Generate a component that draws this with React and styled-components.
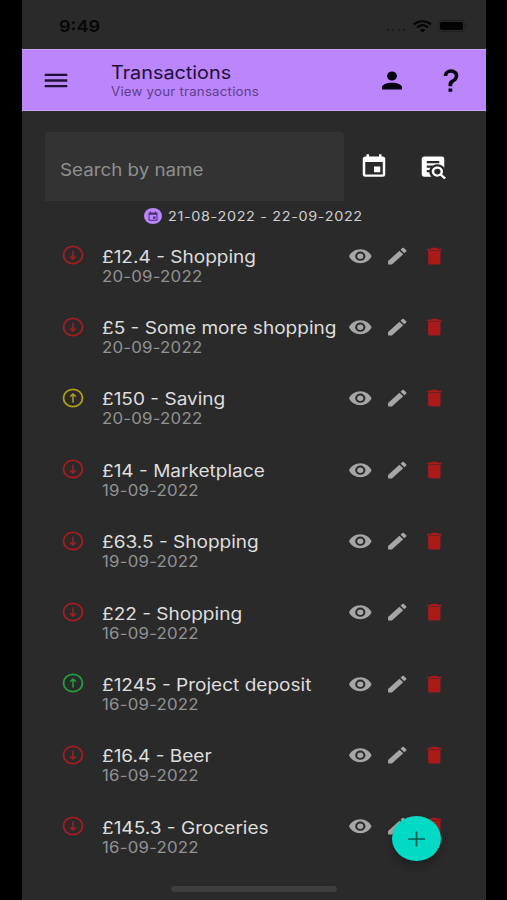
import React from "react";
import styled, { createGlobalStyle } from "styled-components";

const GlobalStyle = createGlobalStyle`
  * { box-sizing: border-box; }
  body { margin: 0; background: #000; font-family: Inter, "Liberation Sans", sans-serif; }
  button { border: 0; padding: 0; background: none; font: inherit; color: inherit; }
`;

const Screen = styled.main`
  position: relative;
  width: 464px;
  height: 900px;
  margin-left: 22px;
  background: #2a2a2a;
  overflow: hidden;
`;

const Label = styled.span`
  display: block;
  width: max-content;
  white-space: nowrap;
  font-size: ${(p) => p.$size}px;
  line-height: ${(p) => p.$line}px;
  font-weight: ${(p) => p.$weight || 400};
  letter-spacing: ${(p) => p.$tracking || 0}px;
  color: ${(p) => p.$color};
  transform: scaleX(${(p) => p.$stretch || 1.1});
  transform-origin: left center;
`;

const StatusBar = styled.div`
  display: flex;
  align-items: center;
  justify-content: space-between;
  height: 49px;
  padding: 3px 18px 0 37px;
`;

const StatusIcons = styled.div`
  display: flex;
  align-items: center;
  gap: 6px;
`;

const SignalDots = styled.svg`
  margin-top: 8px;
`;

const AppBar = styled.header`
  display: flex;
  align-items: center;
  height: 62px;
  padding: 0 20px 0 19px;
  background: #bb86fc;
  border-top: 1px solid #c9a2f5;
  border-bottom: 1px solid #c9a2f5;
`;

const Heading = styled.div`
  flex: 1;
  padding: 3px 0 0 40px;
`;

const AppActions = styled.div`
  display: flex;
  gap: 29px;
`;

const IconButton = styled.button`
  display: flex;
  color: ${(p) => p.$color};
`;

const SearchRow = styled.div`
  display: flex;
  align-items: center;
  height: 69px;
  margin: 21px 0 0 23px;
`;

const SearchField = styled.div`
  display: flex;
  align-items: center;
  width: 299px;
  height: 69px;
  padding: 6px 15px 0;
  margin-right: 14.5px;
  background: #333;
  border-radius: 4px 4px 0 0;
`;

const SearchActions = styled.div`
  display: flex;
  gap: 29.5px;
`;

const DateRange = styled.div`
  display: flex;
  align-items: center;
  height: 30px;
  padding-left: 122px;
  gap: 6px;
`;

const DateBadge = styled.span`
  display: flex;
  align-items: center;
  justify-content: center;
  width: 18px;
  height: 16px;
  border-radius: 50%;
  background: #bb86fc;
  color: #4c2b73;
`;

const DateText = styled.div`
  padding-top: 2px;
`;

const List = styled.div`
  display: grid;
  grid-auto-rows: 71.35px;
  padding-top: 13.5px;
`;

const Row = styled.div`
  display: grid;
  grid-template-columns: 40px 246px auto;
  align-items: start;
  padding-left: 40px;
`;

const DirectionSlot = styled.span`
  display: flex;
  padding-top: 0.9px;
`;

const RowText = styled.div`
  min-width: 0;
  padding-top: 2.3px;
`;

const RowActions = styled.div`
  display: flex;
  gap: 12.6px;
`;

const Fab = styled.button`
  position: absolute;
  left: 370px;
  top: 816px;
  display: flex;
  align-items: center;
  justify-content: center;
  width: 49px;
  height: 45px;
  border-radius: 50%;
  background: #03dac6;
  color: #07584f;
  box-shadow: 0 5px 9px rgba(0, 0, 0, 0.28);
`;

const HomeIndicator = styled.div`
  position: absolute;
  left: 149px;
  bottom: 8px;
  width: 166px;
  height: 6px;
  border-radius: 3px;
  background: #3e3e3e;
`;

const paths = {
  menu: "M3,5.9H21V8.1H3V5.9M3,10.9H21V13.1H3V10.9M3,15.9H21V18.1H3V15.9Z",
  account: "M12,4A4,4 0 0,1 16,8A4,4 0 0,1 12,12A4,4 0 0,1 8,8A4,4 0 0,1 12,4M12,14C16.42,14 20,15.79 20,18V20H4V18C4,15.79 7.58,14 12,14Z",
  help: "M10,19H13V22H10V19M12,2C17.35,2.22 19.68,7.62 16.5,11.67C15.67,12.67 14.33,13.33 13.67,14.17C13,15 13,16 13,17H10C10,15.33 10,13.92 10.67,12.92C11.33,11.92 12.67,11.33 13.5,10.67C15.92,8.43 15.32,5.26 12,5A3,3 0 0,0 9,8H6A6,6 0 0,1 12,2Z",
  calendar: "M19,19H5V8H19M16,1V3H8V1H6V3H5C3.89,3 3,3.89 3,5V19A2,2 0 0,0 5,21H19A2,2 0 0,0 21,19V5C21,3.89 20.1,3 19,3H18V1M17,12H12V17H17V12Z",
  textSearch: "M15.5,12C18,12 20,14 20,16.5C20,17.38 19.75,18.21 19.31,18.9L22.39,22L21,23.39L17.88,20.32C17.19,20.75 16.37,21 15.5,21C13,21 11,19 11,16.5C11,14 13,12 15.5,12M15.5,14A2.5,2.5 0 0,0 13,16.5A2.5,2.5 0 0,0 15.5,19A2.5,2.5 0 0,0 18,16.5A2.5,2.5 0 0,0 15.5,14M7,15V17H9C9.14,18.55 9.8,19.94 10.81,21H5C3.89,21 3,20.1 3,19V5C3,3.89 3.89,3 5,3H19A2,2 0 0,1 21,5V13.03C19.85,11.21 17.82,10 15.5,10C14.23,10 13.04,10.37 12.04,11H7V13H10C9.64,13.6 9.34,14.28 9.17,15H7M17,9V7H7V9H17Z",
  eye: "M12,9A3,3 0 0,0 9,12A3,3 0 0,0 12,15A3,3 0 0,0 15,12A3,3 0 0,0 12,9M12,17A5,5 0 0,1 7,12A5,5 0 0,1 12,7A5,5 0 0,1 17,12A5,5 0 0,1 12,17M12,4.5C7,4.5 2.73,7.61 1,12C2.73,16.39 7,19.5 12,19.5C17,19.5 21.27,16.39 23,12C21.27,7.61 17,4.5 12,4.5Z",
  pencil: "M20.71,7.04C21.1,6.65 21.1,6 20.71,5.63L18.37,3.29C18,2.9 17.35,2.9 16.96,3.29L15.12,5.12L18.87,8.87M3,17.25V21H6.75L17.81,9.93L14.06,6.18L3,17.25Z",
  trash: "M19,4H15.5L14.5,3H9.5L8.5,4H5V6H19M6,19A2,2 0 0,0 8,21H16A2,2 0 0,0 18,19V6.4H6V19Z",
  plus: "M19,12.7H12.7V19H11.3V12.7H5V11.3H11.3V5H12.7V11.3H19V12.7Z",
};

const Icon = ({ name, w = 30, h = 27 }) => (
  <svg width={w} height={h} viewBox="0 0 24 24" preserveAspectRatio="none" fill="currentColor" aria-hidden="true">
    <path d={paths[name]} />
  </svg>
);

const directionColors = { out: "#a81c20", in: "#22a03a", saving: "#b0a018" };

const DirectionIcon = ({ kind }) => (
  <svg width="22" height="20" viewBox="0 0 22 20" fill="none" stroke={directionColors[kind]} aria-hidden="true">
    <ellipse cx="11" cy="10" rx="9.5" ry="8.6" strokeWidth="1.8" />
    <path
      d={kind === "out" ? "M11 5.6V14M8.2 11.4L11 14L13.8 11.4" : "M11 14.4V6M8.2 8.6L11 6L13.8 8.6"}
      strokeWidth="1.5"
    />
  </svg>
);

const transactions = [
  ["out", "£12.4 - Shopping", "20-09-2022"],
  ["out", "£5 - Some more shopping", "20-09-2022"],
  ["saving", "£150 - Saving", "20-09-2022"],
  ["out", "£14 - Marketplace", "19-09-2022"],
  ["out", "£63.5 - Shopping", "19-09-2022"],
  ["out", "£22 - Shopping", "16-09-2022"],
  ["in", "£1245 - Project deposit", "16-09-2022"],
  ["out", "£16.4 - Beer", "16-09-2022"],
  ["out", "£145.3 - Groceries", "16-09-2022"],
];

const Transaction = ({ kind, title, date }) => (
  <Row>
    <DirectionSlot><DirectionIcon kind={kind} /></DirectionSlot>
    <RowText>
      <Label $size={17} $line={20} $color="#dedede" $stretch={1.12}>{title}</Label>
      <Label $size={15.2} $line={20} $color="#929292" $tracking={0.2} $stretch={1.107}>{date}</Label>
    </RowText>
    <RowActions>
      <IconButton $color="#a6a6a6" aria-label="View"><Icon name="eye" w={24.6} h={22.4} /></IconButton>
      <IconButton $color="#a6a6a6" aria-label="Edit"><Icon name="pencil" w={24.6} h={22.4} /></IconButton>
      <IconButton $color="#ab1a1b" aria-label="Delete"><Icon name="trash" w={24.6} h={22.4} /></IconButton>
    </RowActions>
  </Row>
);

export default function App() {
  return (
    <>
      <GlobalStyle />
      <Screen>
        <StatusBar>
          <Label $size={16.5} $line={20} $weight={600} $color="#070707" $stretch={1.1}>9:49</Label>
          <StatusIcons>
            <SignalDots width="21" height="4" viewBox="0 0 21 4" fill="#1d1d1d">
              <circle cx="2" cy="2" r="1.2" /><circle cx="7" cy="2" r="1.2" /><circle cx="13" cy="2" r="1.2" /><circle cx="18" cy="2" r="1.2" />
            </SignalDots>
            <svg width="19" height="13" viewBox="0 0 19 13" fill="none" stroke="#050505" strokeWidth="2.1">
              <path d="M0.8 4.4C6 0.1 13 0.1 18.2 4.4M4 7.4C7.4 4.6 11.6 4.6 15 7.4" />
              <path d="M6.7 10C8.4 8.7 10.6 8.7 12.3 10L9.5 12.4Z" fill="#050505" stroke="none" />
            </svg>
            <svg width="30" height="12" viewBox="0 0 30 12">
              <rect x="0.6" y="0.6" width="25.8" height="10.8" rx="3.2" fill="none" stroke="#1f1f1f" />
              <rect x="2" y="2" width="23" height="8" rx="2" fill="#030303" />
              <path d="M28 4Q29.8 6 28 8Z" fill="#1f1f1f" />
            </svg>
          </StatusIcons>
        </StatusBar>

        <AppBar>
          <IconButton $color="#210f38" aria-label="Menu"><Icon name="menu" /></IconButton>
          <Heading>
            <Label $size={18} $line={20} $color="#210f38" $stretch={1.1}>Transactions</Label>
            <Label $size={12.6} $line={17} $color="#613d8c" $tracking={0.2} $stretch={1.055}>View your transactions</Label>
          </Heading>
          <AppActions>
            <IconButton $color="#080310" aria-label="Account"><Icon name="account" /></IconButton>
            <IconButton $color="#080310" aria-label="Help"><Icon name="help" /></IconButton>
          </AppActions>
        </AppBar>

        <SearchRow>
          <SearchField>
            <Label $size={16.8} $line={20} $color="#8f8f8f" $stretch={1.118}>Search by name</Label>
          </SearchField>
          <SearchActions>
            <IconButton $color="#fff" aria-label="Pick dates"><Icon name="calendar" /></IconButton>
            <IconButton $color="#fff" aria-label="Advanced search"><Icon name="textSearch" /></IconButton>
          </SearchActions>
        </SearchRow>

        <DateRange>
          <DateBadge><Icon name="calendar" w={12} h={11} /></DateBadge>
          <DateText>
            <Label $size={12.8} $line={18} $color="#d0d0d0" $tracking={0.6} $stretch={1.125}>21-08-2022 - 22-09-2022</Label>
          </DateText>
        </DateRange>

        <List>
          {transactions.map(([kind, title, date]) => (
            <Transaction key={title} kind={kind} title={title} date={date} />
          ))}
        </List>

        <HomeIndicator />
        <Fab aria-label="Add transaction"><Icon name="plus" w={29} h={26} /></Fab>
      </Screen>
    </>
  );
}
